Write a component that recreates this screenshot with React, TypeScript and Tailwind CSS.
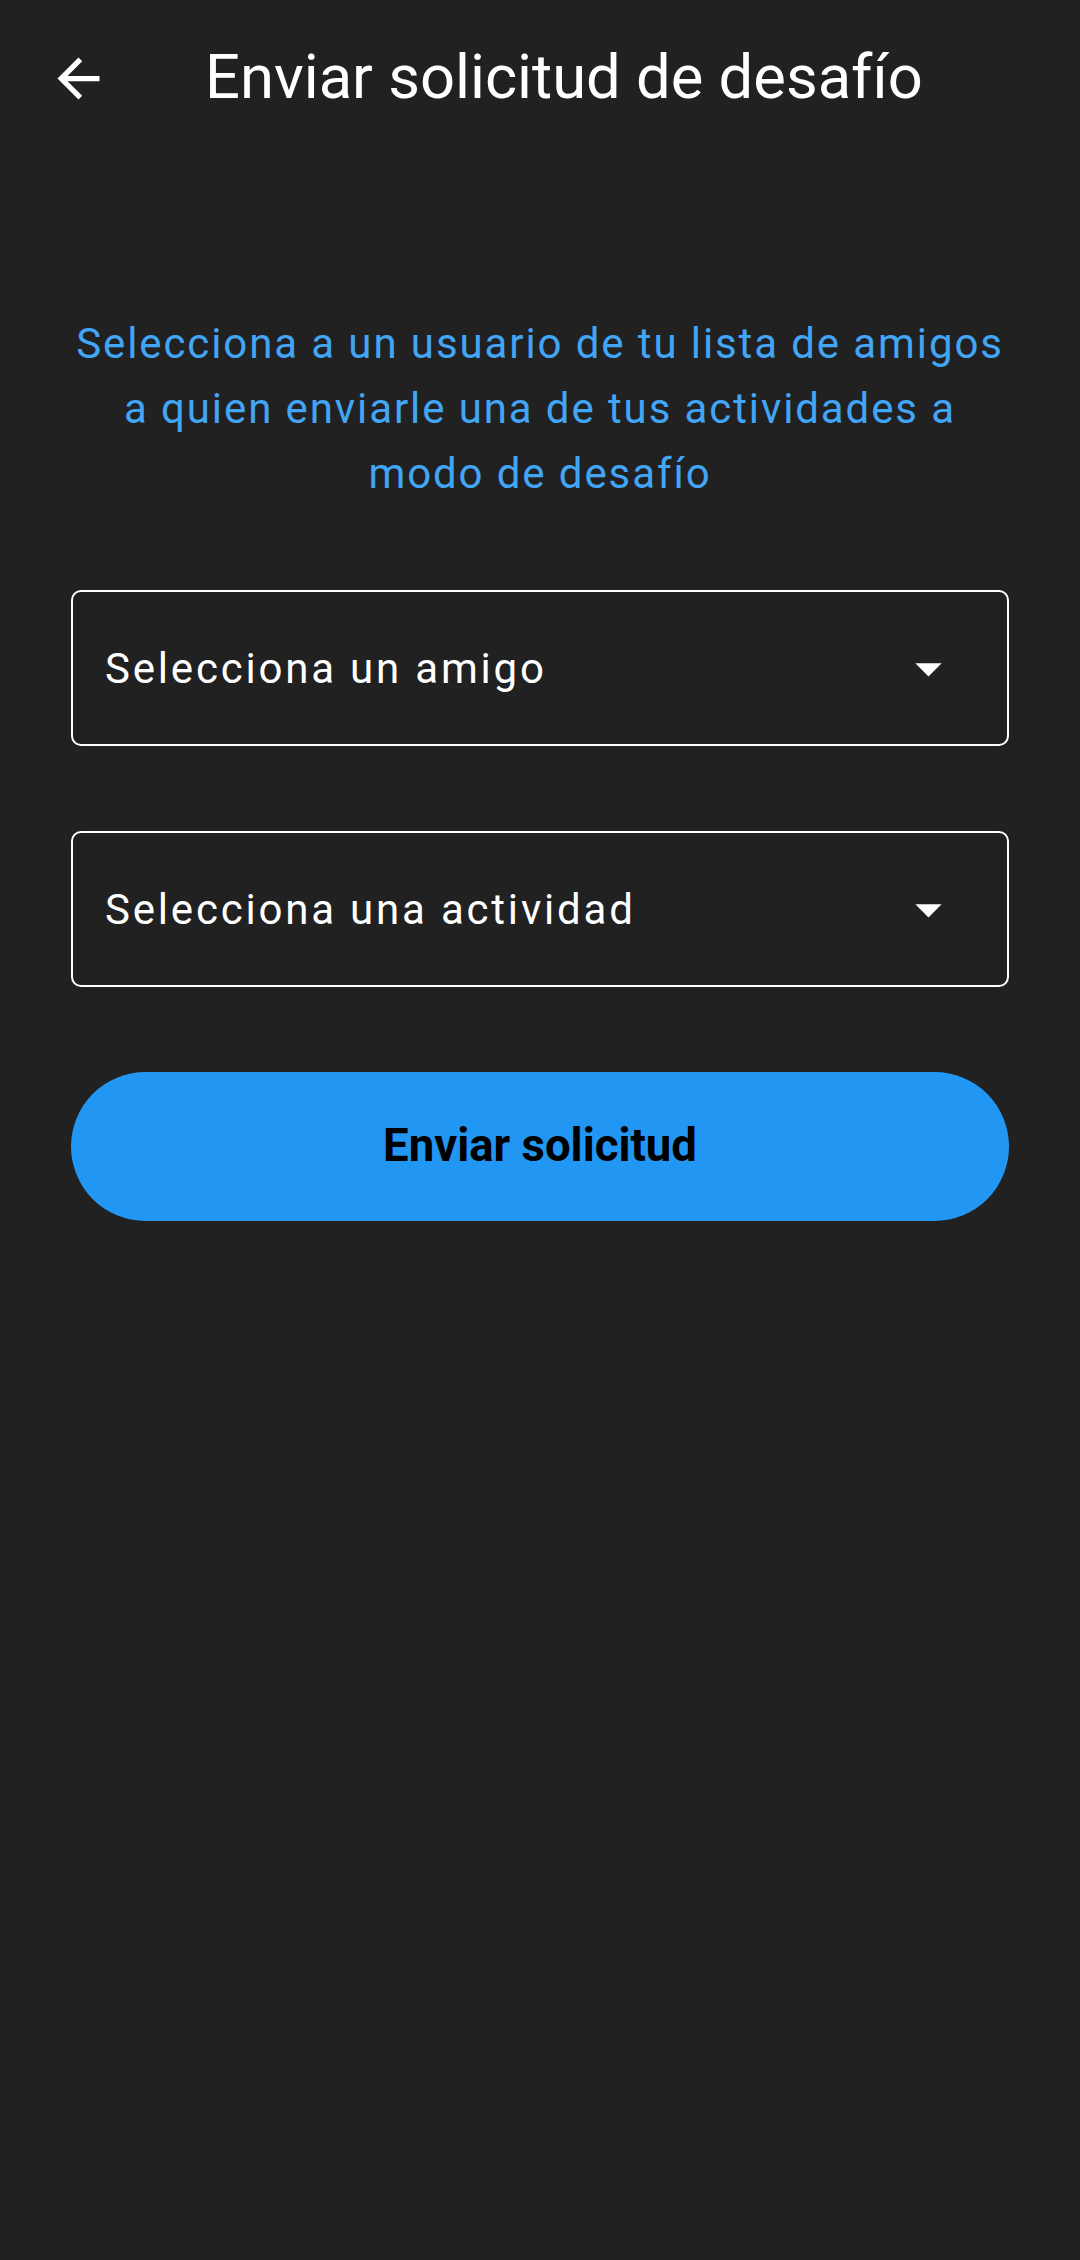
import { useState } from 'react'

function ArrowDropDown() {
  return (
    <svg width="63" height="63" viewBox="0 0 24 24" fill="currentColor" className="shrink-0">
      <path d="M7 10l5 5 5-5z" />
    </svg>
  )
}

function Select({ label }: { label: string }) {
  return (
    <button
      type="button"
      className="flex h-[156px] w-full items-center justify-between rounded-[10px] border-2 border-white pl-[32px] pr-[47px] text-left text-white"
    >
      <span className="text-[42px] tracking-[2.8px]">{label}</span>
      <ArrowDropDown />
    </button>
  )
}

export default function App() {
  const [friend] = useState('')
  const [activity] = useState('')

  return (
    <div
      className="min-h-[2260px] w-full bg-[#212121] text-white"
      style={{ fontFamily: 'Roboto, "Noto Sans", sans-serif' }}
    >
      {/* app bar */}
      <header className="flex h-[156px] items-center">
        <button type="button" className="ml-[47px] flex h-[63px] w-[63px] items-center justify-center">
          <svg width="63" height="63" viewBox="0 0 24 24" fill="currentColor">
            <path d="M20 11H7.83l5.59-5.59L12 4l-8 8 8 8 1.41-1.41L7.83 13H20v-2z" />
          </svg>
        </button>
        <h1 className="ml-[95px] text-[61.5px] leading-none font-normal">Enviar solicitud de desafío</h1>
      </header>

      <main className="px-[71px] pt-[155px]">
        <p className="text-center text-[42px] leading-[65px] tracking-[1.9px] text-[#42a5f5]">
          Selecciona a un usuario de tu lista de amigos a quien enviarle una de tus actividades a modo de desafío
        </p>

        <div className="mt-[84px] flex flex-col gap-[85px]">
          <Select label={friend || 'Selecciona un amigo'} />
          <Select label={activity || 'Selecciona una actividad'} />

          <button
            type="button"
            className="h-[149px] w-full rounded-full bg-[#2196f3] text-[45.5px] font-bold text-black"
          >
            Enviar solicitud
          </button>
        </div>
      </main>
    </div>
  )
}
